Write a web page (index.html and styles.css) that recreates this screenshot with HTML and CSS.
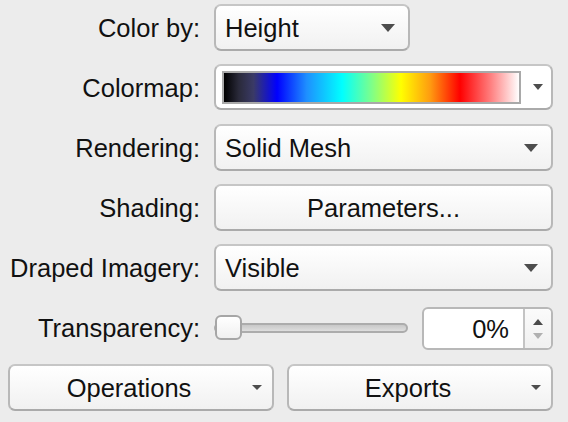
FILE: index.html
```html
<!DOCTYPE html>
<html>
<head>
<meta charset="utf-8">
<link rel="stylesheet" href="styles.css">
</head>
<body>
<div class="panel">
  <div class="form">
    <div class="label">Color by:</div>
    <div class="combo narrow">
      <span class="value">Height</span>
      <svg class="arrow" width="14" height="8" viewBox="0 0 14 8"><polygon points="0,0 14,0 7,8" /></svg>
    </div>

    <div class="label">Colormap:</div>
    <div class="combo colormap">
      <div class="gradient"></div>
      <svg class="arrow small" width="10" height="6" viewBox="0 0 10 6"><polygon points="0,0 10,0 5,6" /></svg>
    </div>

    <div class="label">Rendering:</div>
    <div class="combo">
      <span class="value">Solid Mesh</span>
      <svg class="arrow" width="14" height="8" viewBox="0 0 14 8"><polygon points="0,0 14,0 7,8" /></svg>
    </div>

    <div class="label">Shading:</div>
    <div class="button"><span class="value">Parameters...</span></div>

    <div class="label">Draped Imagery:</div>
    <div class="combo">
      <span class="value">Visible</span>
      <svg class="arrow" width="14" height="8" viewBox="0 0 14 8"><polygon points="0,0 14,0 7,8" /></svg>
    </div>

    <div class="label">Transparency:</div>
    <div class="transparency">
      <div class="slider">
        <div class="track"></div>
        <div class="handle"></div>
      </div>
      <div class="spin">
        <div class="spin-value"><span class="value">0%</span></div>
        <div class="stepper">
          <svg width="10" height="6" viewBox="0 0 10 6"><polygon points="5,0 10,6 0,6" fill="#4a4a4a"/></svg>
          <svg width="10" height="6" viewBox="0 0 10 6"><polygon points="0,0 10,0 5,6" fill="#b0b0b0"/></svg>
        </div>
      </div>
    </div>

    <div class="actions">
      <div class="menu-button">
        <span class="menu-text">Operations</span>
        <svg class="arrow tiny" width="10" height="5" viewBox="0 0 10 5"><polygon points="0,0 10,0 5,5" /></svg>
      </div>
      <div class="menu-button">
        <span class="menu-text">Exports</span>
        <svg class="arrow tiny" width="10" height="5" viewBox="0 0 10 5"><polygon points="0,0 10,0 5,5" /></svg>
      </div>
    </div>
  </div>
</div>
</body>
</html>
```

FILE: styles.css
```css
html, body {
  margin: 0;
  padding: 0;
  background: #ececec;
}

body {
  width: 568px;
  height: 422px;
  overflow: hidden;
  font-family: "Liberation Sans", Arial, sans-serif;
  font-size: 25.5px;
  color: #111;
}

.panel {
  padding: 4px 15px 0 8px;
}

.form {
  display: grid;
  grid-template-columns: 192px 339px;
  grid-auto-rows: 47px;
  column-gap: 14px;
  row-gap: 13px;
}

.label {
  display: flex;
  align-items: center;
  justify-content: flex-end;
  white-space: nowrap;
  padding-top: 2px;
}

.value,
.menu-text {
  padding-top: 2px;
}

.combo,
.button,
.menu-button {
  box-sizing: border-box;
  border: 2px solid #b8b8b8;
  border-top-color: #c6c6c6;
  border-bottom-color: #aaaaaa;
  border-radius: 7px;
  background: linear-gradient(#ffffff, #f1f1f1);
  display: flex;
  align-items: center;
}

.combo {
  justify-content: space-between;
  padding: 0 13px 0 9px;
  height: 47px;
}

.combo.narrow {
  width: 196px;
}

.arrow polygon {
  fill: #4d4d4d;
}

.combo.colormap {
  height: 46px;
  padding: 0 8px 0 6px;
  background: #ffffff;
}

.gradient {
  box-sizing: border-box;
  width: 299px;
  height: 33px;
  border: 2px solid #a9a9a9;
  background: linear-gradient(to right,
    #000000 0%,
    #2a2a3a 5%,
    #3a3a66 10%,
    #0000ff 18%,
    #1e8fff 28%,
    #00ffff 40%,
    #7dff8a 50%,
    #ffff00 60%,
    #ff9a10 70%,
    #ff0000 80%,
    #ff7a7a 90%,
    #ffffff 100%);
}

.button {
  justify-content: center;
  height: 47px;
}

.transparency {
  display: flex;
  align-items: center;
  gap: 14px;
}

.slider {
  position: relative;
  width: 194px;
  height: 25px;
  display: flex;
  align-items: center;
}

.track {
  box-sizing: border-box;
  width: 100%;
  height: 10px;
  margin-top: 1px;
  border: 2px solid #acacac;
  border-radius: 5px;
  background: linear-gradient(#c8c8c8, #dedede);
}

.handle {
  position: absolute;
  left: 1px;
  top: 0;
  box-sizing: border-box;
  width: 27px;
  height: 25px;
  border: 2px solid #a6a6a6;
  border-radius: 6px;
  background: linear-gradient(#ffffff, #f0f0f0);
}

.spin {
  box-sizing: border-box;
  width: 131px;
  height: 43px;
  margin-top: 2px;
  border: 2px solid #b8b8b8;
  border-radius: 6px;
  background: #ffffff;
  display: flex;
}

.spin-value {
  flex: 1;
  display: flex;
  align-items: center;
  justify-content: flex-end;
  padding-right: 14px;
  border-right: 2px solid #c4c4c4;
}

.stepper {
  width: 26px;
  display: flex;
  flex-direction: column;
  align-items: center;
  justify-content: center;
  gap: 8px;
  background: linear-gradient(#fbfbfb, #f0f0f0);
  border-radius: 0 5px 5px 0;
}

.actions {
  grid-column: 1 / 3;
  display: grid;
  grid-template-columns: 1fr 1fr;
  column-gap: 13px;
}

.menu-button {
  height: 47px;
  padding: 0 10px 0 10px;
  justify-content: space-between;
}

.menu-text {
  flex: 1;
  text-align: center;
  padding-right: 14px;
}
```
